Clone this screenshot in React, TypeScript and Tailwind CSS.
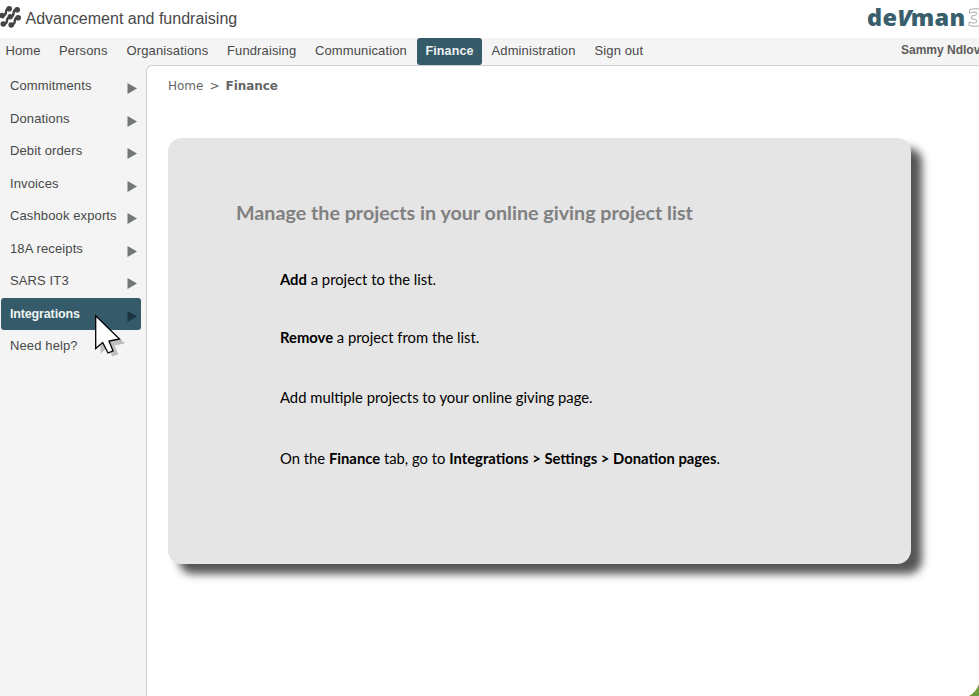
const NAV = [
  { label: "Home", w: "w-[53.5px]" },
  { label: "Persons", w: "w-[67.5px]" },
  { label: "Organisations", w: "w-[100.5px]" },
  { label: "Fundraising", w: "w-[88px]" },
  { label: "Communication", w: "w-[102px]" },
];

const SIDE = [
  "Commitments",
  "Donations",
  "Debit orders",
  "Invoices",
  "Cashbook exports",
  "18A receipts",
  "SARS IT3",
  "Integrations",
  "Need help?",
];

function BrandIcon() {
  return (
    <svg className="block h-[30px] w-[22px] shrink-0" viewBox="0 0 22 30" fill="#444" stroke="#444">
      <path d="M2 15.8 Q6 15.5 6 12 T9.6 8.6 M3.5 24.2 Q7 23.5 7 20.5 T10.2 16.8 Q13.5 16.5 13.5 13.2 T17 9.8 M11 25 Q14.8 24.5 14.8 21 T18.3 17.5" fill="none" strokeWidth="2.4" />
      <g stroke="none">
        <circle cx="9.2" cy="8.8" r="2.8" />
        <circle cx="17.2" cy="9.8" r="2.8" />
        <circle cx="2.2" cy="15.6" r="2.8" />
        <circle cx="10.2" cy="16.8" r="2.7" />
        <circle cx="18.2" cy="17.8" r="2.8" />
        <circle cx="3.3" cy="24" r="2.8" />
        <circle cx="11.2" cy="25" r="2.8" />
      </g>
    </svg>
  );
}

function Cursor() {
  return (
    <svg className="absolute left-[94px] top-[313px] h-[48px] w-[36px]" viewBox="0 0 36 48">
      <path d="M6.5 7 V40.5 L13.5 34.5 L18.5 43.5 L24.3 41.2 L20.3 32.5 L31 30.6 Z" fill="#000" opacity="0.22" />
      <path d="M1.7 2.8 V35.5 L8.7 29.5 L14 40 L19 37.8 L15 28 L25.5 26 Z" fill="#fff" stroke="#000" strokeWidth="1.3" />
    </svg>
  );
}

export default function App() {
  return (
    <div className="relative flex h-[696px] w-[979px] flex-col overflow-hidden bg-[#f4f4f4] font-['Liberation_Sans',Arial,sans-serif] text-[#484848]">
      <header className="flex h-[38px] shrink-0 justify-between bg-white">
        <div className="flex">
          <BrandIcon />
          <span className="ml-[3.5px] mt-[7px] whitespace-nowrap text-[16px] leading-6 text-[#484848]">Advancement and fundraising</span>
        </div>
        <div className="flex w-[112px] whitespace-nowrap font-['Open_Sans',sans-serif] text-[23.5px] leading-[35px]">
          <span className="w-[101px] shrink-0 font-extrabold tracking-[0.3px] text-[#3a5f6c]">
            de<i className="tracking-[-1px]">V</i>man
          </span>
          <svg className="mt-[8px] h-[19px] w-[11px] shrink-0" viewBox="0 0 11 19" fill="none" stroke="#aaa">
            <path d="M11 .8 Q5 .3 1.5 1.8 V5.2 Q5 3.8 8 4.2 Q10 5 8 7 Q6.5 7.8 3.8 7.8 V11 Q7.5 11 8.5 12.2 Q9.5 14.8 6.5 15 Q3.5 15.2 1 14 V17.5 Q5 18.8 11 18" />
          </svg>
        </div>
      </header>

      <nav className="flex h-[27px] shrink-0 whitespace-nowrap pl-[5.5px] text-[13px] leading-[26px] tracking-[0.12px]">
        {NAV.map((n) => (
          <span key={n.label} className={`${n.w} shrink-0`}>{n.label}</span>
        ))}
        <span className="h-[27px] w-[65px] shrink-0 rounded-[3px] bg-[#355a69] text-center text-[12.5px] font-bold text-[#eef4f4]">Finance</span>
        <span className="ml-[9.5px] w-[103px] shrink-0">Administration</span>
        <span>Sign out</span>
        <span className="ml-auto w-[78px] shrink-0 text-[12px] font-bold leading-[25px] tracking-normal text-[#5c5c5c]">Sammy Ndlov</span>
      </nav>

      <div className="flex min-h-0 flex-1">
        <aside className="w-[146px] shrink-0 pl-[1px] pt-[5px] text-[13px] tracking-[0.12px]">
          {SIDE.map((s) => (
            <div
              key={s}
              className={`flex h-[32.55px] w-[140px] justify-between whitespace-nowrap rounded-[3px] pl-[9px] pr-[4px] leading-[32px] ${s === "Integrations" ? "bg-[#355a69] text-[12.5px] font-bold tracking-[-0.15px] text-[#eef4f4]" : ""}`}
            >
              <span>{s}</span>
              {s !== "Need help?" && (
                <svg className="mt-[13px] h-[11px] w-[10px] shrink-0" viewBox="0 0 10 11">
                  <path d="M0.5 0 L10 5.5 L0.5 11 Z" fill={s === "Integrations" ? "#1b3440" : "#747778"} />
                </svg>
              )}
            </div>
          ))}
        </aside>

        <main className="relative flex-1 overflow-hidden rounded-tl-[6px] border-l border-t border-[#d0d0d0] bg-white pl-[21px]">
          <div className="mt-[10px] flex gap-[6px] whitespace-nowrap font-['DejaVu_Sans',sans-serif] text-[12px] leading-[20px] text-[#666]">
            <span>Home</span>
            <span>&gt;</span>
            <span className="font-bold tracking-[-0.05px]">Finance</span>
          </div>
          <section className="mt-[42px] h-[425.5px] w-[743px] whitespace-nowrap rounded-[14px] bg-[#e5e5e5] pl-[68px] pt-[60px] font-['Lato',sans-serif] text-black shadow-[11px_10px_8px_#555]">
            <h1 className="h-[66px] text-[19.7px] font-bold leading-[30px] text-[#808080]">Manage the projects in your online giving project list</h1>
            <div className="pl-[44px] text-[14.8px] leading-[30px]">
              <p className="h-[58px]"><b>Add</b> a project to the list.</p>
              <p className="h-[60px]"><b>Remove</b> a project from the list.</p>
              <p className="h-[61px]">Add multiple projects to your online giving page.</p>
              <p>On the <b>Finance</b> tab, go to <b>Integrations &gt; Settings &gt; Donation pages</b>.</p>
            </div>
          </section>
          <svg className="absolute bottom-0 right-0 h-[12px] w-[10px]" viewBox="0 0 10 12">
            <path d="M10 0 Q7 8 0 12 H10 Z" fill="#6c9c3b" />
          </svg>
        </main>
      </div>
      <Cursor />
    </div>
  );
}
